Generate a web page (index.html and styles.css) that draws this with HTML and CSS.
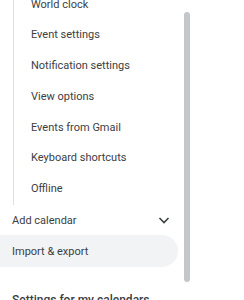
FILE: index.html
```html
<!DOCTYPE html>
<html lang="en">
<head>
  <meta charset="UTF-8" />
  <meta name="viewport" content="width=device-width, initial-scale=1.0" />
  <title>Settings – Calendar</title>
  <link rel="stylesheet" href="styles.css">
</head>
<body>
  <div class="page">
    <div class="nav">
      <ul class="sub-list">
        <li>World clock</li>
        <li>Event settings</li>
        <li>Notification settings</li>
        <li>View options</li>
        <li>Events from Gmail</li>
        <li>Keyboard shortcuts</li>
        <li>Offline</li>
      </ul>
      <div class="row">
        <span>Add calendar</span>
        <svg class="chevron" width="24" height="24" viewBox="0 0 24 24">
          <path d="M7.5 10 12 14.5 16.5 10" fill="none" stroke="#3c4043" stroke-width="1.6"/>
        </svg>
      </div>
      <div class="row active"><span>Import &amp; export</span></div>
      <div class="section-title">Settings for my calendars</div>
    </div>
    <div class="scroll-track">
      <div class="scroll-thumb"></div>
    </div>
  </div>
</body>
</html>
```

FILE: styles.css
```css
body {
  margin: 0;
  background: #fff;
  font-family: Roboto, 'Liberation Sans', sans-serif;
  color: #3c4043;
  overflow: hidden;
}
.page {
  display: flex;
  height: 300px;
}
.nav {
  width: 178px;
  margin-top: -10.4px;
}
.sub-list {
  list-style: none;
  margin: 0 0 0 13px;
  padding: 0;
  border-left: 1px solid #e0e0e0;
}
.sub-list li {
  height: 30.75px;
  line-height: 30.75px;
  padding-left: 17px;
  font-size: 11px;
  white-space: nowrap;
}
.row {
  display: flex;
  align-items: center;
  justify-content: space-between;
  height: 30.75px;
  padding: 0 2px 0 12px;
  font-size: 11px;
}
.row.active {
  background: #f1f3f4;
  border-radius: 0 16px 16px 0;
  height: 32px;
  margin-top: -0.6px;
}
.chevron {
  display: block;
}
.section-title {
  margin-top: 26px;
  padding-left: 12px;
  font-size: 12px;
  font-weight: 500;
  color: #3c4043;
}
.scroll-track {
  width: 6px;
  margin-left: 6px;
}
.scroll-thumb {
  margin-top: 12px;
  height: 270px;
  background: #c4c7ca;
  border-radius: 3px;
}
```
